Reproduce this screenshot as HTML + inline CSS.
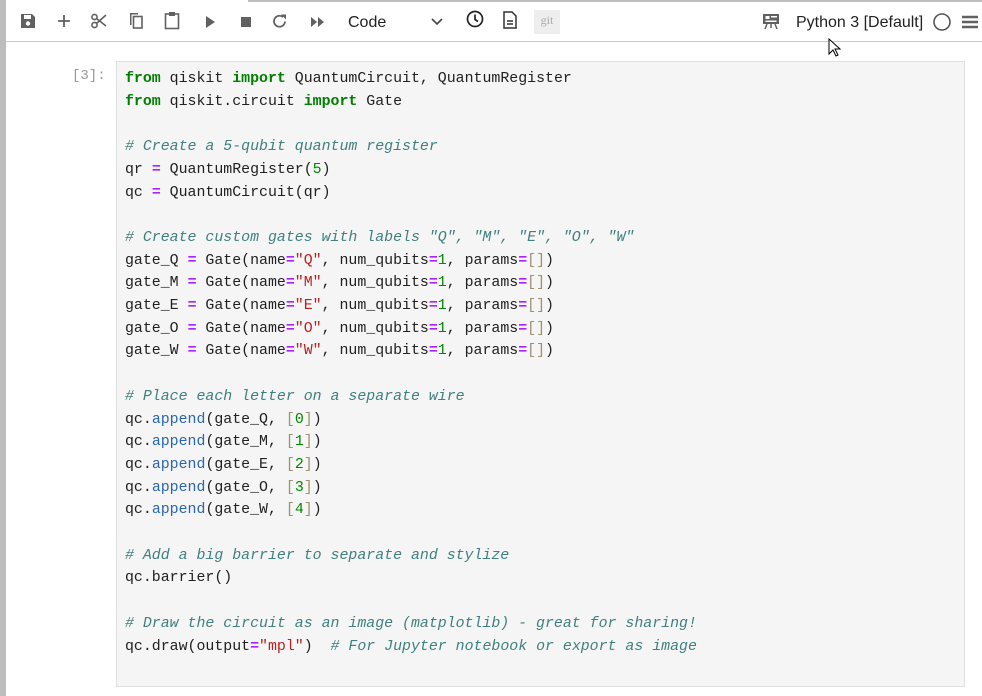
<!DOCTYPE html>
<html><head><meta charset="utf-8"><style>
html,body{margin:0;padding:0;width:982px;height:696px;overflow:hidden;background:#fff;font-family:"Liberation Sans",sans-serif}
#lbar{position:absolute;left:0;top:0;width:6px;height:696px;background:#bdbdbd}
#topline{position:absolute;left:248px;top:0;right:0;height:2px;background:#bdbdbd}
#tb{position:absolute;left:6px;top:2px;right:0;height:39px;border-bottom:1px solid #c8c8c8;background:#fff}
.ic{position:absolute;top:11px}
#code-sel{position:absolute;left:342px;top:12px;font-size:16px;color:#222}
#chev{position:absolute;left:425px;top:13px}
#git{position:absolute;left:528px;top:8px;width:26px;height:24px;background:#eee;color:#aaa;font-family:"Liberation Serif",serif;font-size:12px;text-align:center;line-height:20px}
#kern{position:absolute;left:790px;top:12px;font-size:16px;color:#222}
#prompt{position:absolute;left:72px;top:68px;font-family:"Liberation Mono",monospace;font-size:14px;color:#999}
#cell{position:absolute;left:116px;top:61px;width:847px;height:624px;background:#f5f5f5;border:1px solid #e0e0e0}
pre{margin:0;position:absolute;left:8px;top:6px;font-family:"Liberation Mono",monospace;font-size:14.9px;line-height:22.7px;color:#212121}
.k{color:#008000;font-weight:bold}.o{color:#aa22ff;font-weight:bold}.s{color:#ba2121}.c{color:#408080;font-style:italic}.m{color:#2a66b0}.n{color:#008800}.b{color:#a09070}
</style></head><body>
<div id="lbar"></div><div id="topline"></div>
<div id="tb">
<svg class="ic" style="left:14px;top:11px" width="16" height="16" viewBox="0 0 16 16"><path d="M1 1h11l3 3v11H1z" fill="#616161"/><rect x="4" y="2" width="7" height="4" fill="#fff"/><circle cx="8" cy="10.5" r="2.2" fill="#fff"/></svg>
<svg class="ic" style="left:50px" width="16" height="16"><path d="M8 2v12M2 8h12" stroke="#616161" stroke-width="1.8"/></svg>
<svg class="ic" style="left:84px;top:10px" width="18" height="18" viewBox="0 0 18 18"><circle cx="4.5" cy="13" r="2.6" fill="none" stroke="#616161" stroke-width="1.6"/><circle cx="4.5" cy="5" r="2.6" fill="none" stroke="#616161" stroke-width="1.6"/><path d="M6.5 6.5L16 14M6.5 11.5L16 3" stroke="#616161" stroke-width="1.6"/></svg>
<svg class="ic" style="left:122px;top:10px" width="16" height="18"><path d="M2 1h8v1.5H3.5V13H2z" fill="#616161"/><rect x="5.5" y="4.5" width="8.5" height="11.5" fill="none" stroke="#616161" stroke-width="1.6"/></svg>
<svg class="ic" style="left:158px;top:9px" width="16" height="19"><rect x="1.5" y="3" width="13" height="14.5" fill="none" stroke="#616161" stroke-width="1.6"/><rect x="5" y="1" width="6" height="4" fill="#616161"/></svg>
<svg class="ic" style="left:198px;top:13px" width="12" height="14"><path d="M2 1l9 6-9 6z" fill="#616161"/></svg>
<svg class="ic" style="left:234px;top:14px" width="12" height="12"><rect x="1" y="1" width="10" height="10" fill="#616161"/></svg>
<svg class="ic" style="left:266px;top:11px" width="16" height="17"><path d="M13 8.5A5.5 5.5 0 1 1 11 4" fill="none" stroke="#616161" stroke-width="1.8"/><path d="M9 1.5h5v5z" fill="#616161"/></svg>
<svg class="ic" style="left:304px;top:14px" width="16" height="12"><path d="M1 1l6 5-6 5zM8 1l6 5-6 5z" fill="#616161"/></svg>
<div id="code-sel">Code</div>
<svg id="chev" width="12" height="12"><path d="M1 4l5 5 5-5" fill="none" stroke="#444" stroke-width="1.6"/></svg>
<svg class="ic" style="left:460px;top:8px" width="18" height="18"><circle cx="9" cy="9" r="7.5" fill="none" stroke="#222" stroke-width="1.7"/><path d="M9 4.5V9.5l3 2" fill="none" stroke="#222" stroke-width="1.7"/></svg>
<svg class="ic" style="left:497px;top:9px" width="14" height="18"><path d="M1 1h8l4 4v12H1z" fill="none" stroke="#333" stroke-width="1.5"/><path d="M4 10h6M4 13h6" stroke="#333" stroke-width="1.4"/></svg>
<div id="git">git</div>
<svg class="ic" style="left:756px;top:11px" width="18" height="17"><rect x="1" y="1" width="16" height="10" fill="#616161"/><rect x="3.5" y="3" width="4" height="3" fill="#fff"/><rect x="9" y="3" width="6" height="1.5" fill="#fff"/><rect x="3.5" y="7.5" width="11" height="1.5" fill="#fff"/><path d="M5 11l-2 5M13 11l2 5M9 11v4" stroke="#616161" stroke-width="1.5"/></svg>
<div id="kern">Python 3 [Default]</div>
<svg class="ic" style="left:926px;top:10px" width="20" height="20"><circle cx="10" cy="10" r="8" fill="none" stroke="#555" stroke-width="1.6"/></svg>
<svg class="ic" style="left:956px;top:13px" width="16" height="14"><path d="M0 2h16M0 7h16M0 12h16" stroke="#616161" stroke-width="2.6"/></svg>
</div>
<svg style="position:absolute;left:828px;top:38px" width="14" height="20"><path d="M1 1v15l4-4 3 6 2-1-3-6h5z" fill="#fff" stroke="#000" stroke-width="1"/></svg>
<div id="prompt">[3]:</div>
<div id="cell"><pre><span class="k">from</span> qiskit <span class="k">import</span> QuantumCircuit, QuantumRegister
<span class="k">from</span> qiskit.circuit <span class="k">import</span> Gate

<span class="c"># Create a 5-qubit quantum register</span>
qr <span class="o">=</span> QuantumRegister(<span class="n">5</span>)
qc <span class="o">=</span> QuantumCircuit(qr)

<span class="c"># Create custom gates with labels "Q", "M", "E", "O", "W"</span>
gate_Q <span class="o">=</span> Gate(name<span class="o">=</span><span class="s">"Q"</span>, num_qubits<span class="o">=</span><span class="n">1</span>, params<span class="o">=</span><span class="b">[]</span>)
gate_M <span class="o">=</span> Gate(name<span class="o">=</span><span class="s">"M"</span>, num_qubits<span class="o">=</span><span class="n">1</span>, params<span class="o">=</span><span class="b">[]</span>)
gate_E <span class="o">=</span> Gate(name<span class="o">=</span><span class="s">"E"</span>, num_qubits<span class="o">=</span><span class="n">1</span>, params<span class="o">=</span><span class="b">[]</span>)
gate_O <span class="o">=</span> Gate(name<span class="o">=</span><span class="s">"O"</span>, num_qubits<span class="o">=</span><span class="n">1</span>, params<span class="o">=</span><span class="b">[]</span>)
gate_W <span class="o">=</span> Gate(name<span class="o">=</span><span class="s">"W"</span>, num_qubits<span class="o">=</span><span class="n">1</span>, params<span class="o">=</span><span class="b">[]</span>)

<span class="c"># Place each letter on a separate wire</span>
qc.<span class="m">append</span>(gate_Q, <span class="b">[</span><span class="n">0</span><span class="b">]</span>)
qc.<span class="m">append</span>(gate_M, <span class="b">[</span><span class="n">1</span><span class="b">]</span>)
qc.<span class="m">append</span>(gate_E, <span class="b">[</span><span class="n">2</span><span class="b">]</span>)
qc.<span class="m">append</span>(gate_O, <span class="b">[</span><span class="n">3</span><span class="b">]</span>)
qc.<span class="m">append</span>(gate_W, <span class="b">[</span><span class="n">4</span><span class="b">]</span>)

<span class="c"># Add a big barrier to separate and stylize</span>
qc.barrier()

<span class="c"># Draw the circuit as an image (matplotlib) - great for sharing!</span>
qc.draw(output<span class="o">=</span><span class="s">"mpl"</span>)  <span class="c"># For Jupyter notebook or export as image</span>
</pre></div>
</body></html>
